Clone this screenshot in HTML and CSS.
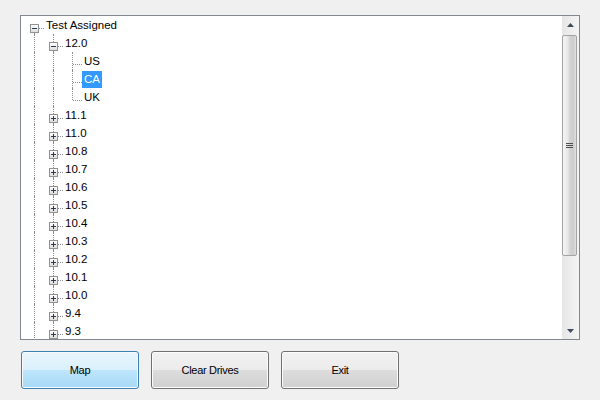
FILE: index.html
```html
<!DOCTYPE html>
<html>
<head>
<meta charset="utf-8">
<link rel="stylesheet" href="styles.css">
</head>
<body>
<div class="app">
  <div class="treebox">
    <div class="tree">
      <div class="row"><span class="cell first"><span class="box minus"></span></span><span class="label">Test Assigned</span></div>
      <div class="row"><span class="cell vline"></span><span class="cell tee"><span class="box minus"></span></span><span class="label">12.0</span></div>
      <div class="row"><span class="cell vline"></span><span class="cell vline"></span><span class="cell tee"></span><span class="label">US</span></div>
      <div class="row"><span class="cell vline"></span><span class="cell vline"></span><span class="cell tee"></span><span class="label selected">CA</span></div>
      <div class="row"><span class="cell vline"></span><span class="cell vline"></span><span class="cell last"></span><span class="label">UK</span></div>
      <div class="row"><span class="cell vline"></span><span class="cell tee"><span class="box plus"></span></span><span class="label">11.1</span></div>
      <div class="row"><span class="cell vline"></span><span class="cell tee"><span class="box plus"></span></span><span class="label">11.0</span></div>
      <div class="row"><span class="cell vline"></span><span class="cell tee"><span class="box plus"></span></span><span class="label">10.8</span></div>
      <div class="row"><span class="cell vline"></span><span class="cell tee"><span class="box plus"></span></span><span class="label">10.7</span></div>
      <div class="row"><span class="cell vline"></span><span class="cell tee"><span class="box plus"></span></span><span class="label">10.6</span></div>
      <div class="row"><span class="cell vline"></span><span class="cell tee"><span class="box plus"></span></span><span class="label">10.5</span></div>
      <div class="row"><span class="cell vline"></span><span class="cell tee"><span class="box plus"></span></span><span class="label">10.4</span></div>
      <div class="row"><span class="cell vline"></span><span class="cell tee"><span class="box plus"></span></span><span class="label">10.3</span></div>
      <div class="row"><span class="cell vline"></span><span class="cell tee"><span class="box plus"></span></span><span class="label">10.2</span></div>
      <div class="row"><span class="cell vline"></span><span class="cell tee"><span class="box plus"></span></span><span class="label">10.1</span></div>
      <div class="row"><span class="cell vline"></span><span class="cell tee"><span class="box plus"></span></span><span class="label">10.0</span></div>
      <div class="row"><span class="cell vline"></span><span class="cell tee"><span class="box plus"></span></span><span class="label">9.4</span></div>
      <div class="row"><span class="cell vline"></span><span class="cell tee"><span class="box plus"></span></span><span class="label">9.3</span></div>
    </div>
    <div class="scrollbar">
      <div class="sb-btn"><svg width="7" height="4" viewBox="0 0 7 4"><path d="M0 4 L3.5 0 L7 4 Z" fill="#3f4a5c"/></svg></div>
      <div class="sb-track">
        <div class="thumb"><span class="grip"></span></div>
      </div>
      <div class="sb-btn"><svg width="7" height="4" viewBox="0 0 7 4"><path d="M0 0 L7 0 L3.5 4 Z" fill="#3f4a5c"/></svg></div>
    </div>
  </div>
  <div class="buttons">
    <button class="btn hot">Map</button>
    <button class="btn">Clear Drives</button>
    <button class="btn">Exit</button>
  </div>
</div>
</body>
</html>
```
FILE: styles.css
```css
html, body {
  margin: 0;
  padding: 0;
  background: #f0f0f0;
  font-family: "Liberation Sans", Arial, sans-serif;
  font-size: 11px;
  color: #000;
}
.app {
  padding: 15px 0 0 20px;
}
.treebox {
  width: 560px;
  height: 325px;
  box-sizing: border-box;
  border: 1px solid #828790;
  background: #fff;
  display: flex;
}
.tree {
  flex: 1;
  overflow: hidden;
  padding-left: 4px;
}
.row {
  display: flex;
  height: 18px;
  align-items: flex-start;
}
.cell {
  position: relative;
  width: 19px;
  height: 18px;
  flex: none;
}
.cell::before,
.cell::after {
  content: "";
  position: absolute;
}
.vline::before,
.tee::before {
  left: 9px;
  top: 0;
  bottom: 0;
  border-left: 1px dotted #8c8c8c;
}
.last::before {
  left: 9px;
  top: 0;
  height: 12px;
  border-left: 1px dotted #8c8c8c;
}
.first::before {
  left: 9px;
  top: 12px;
  bottom: 0;
  border-left: 1px dotted #8c8c8c;
}
.tee::after,
.last::after,
.first::after {
  left: 10px;
  right: 0;
  top: 12px;
  border-top: 1px dotted #8c8c8c;
}
.box {
  position: absolute;
  left: 5px;
  top: 8px;
  width: 9px;
  height: 9px;
  box-sizing: border-box;
  border: 1px solid #929292;
  background: linear-gradient(#ffffff, #dedede);
  z-index: 1;
}
.box::before {
  content: "";
  position: absolute;
  left: 1px;
  top: 3px;
  width: 5px;
  height: 1px;
  background: #2b3a56;
}
.plus::after {
  content: "";
  position: absolute;
  left: 3px;
  top: 1px;
  width: 1px;
  height: 5px;
  background: #2b3a56;
}
.label {
  font-size: 11.5px;
  line-height: 17px;
  margin-top: 1px;
  padding: 0 2px;
  white-space: nowrap;
}
.label.selected {
  background: #3399ff;
  color: #fff;
}
.scrollbar {
  width: 17px;
  flex: none;
  display: flex;
  flex-direction: column;
  background: linear-gradient(to right, #e6e6e6, #f4f4f4);
}
.sb-btn {
  height: 17px;
  flex: none;
  display: flex;
  align-items: center;
  justify-content: center;
}
.sb-track {
  flex: 1;
  padding-top: 2px;
}
.thumb {
  margin: 0 2px 0 0;
  height: 221px;
  box-sizing: border-box;
  border: 1px solid #a3a3a3;
  border-radius: 2px;
  background: linear-gradient(to right, #f6f6f6 0%, #e8e8e8 35%, #d2d2d2 55%, #cdcdcd 80%, #e0e0e0 100%);
  display: flex;
  align-items: center;
  justify-content: center;
}
.grip {
  width: 7px;
  height: 5px;
  background: repeating-linear-gradient(#4e4e4e 0 1px, transparent 1px 2px);
}
.buttons {
  display: flex;
  gap: 12px;
  margin-top: 11px;
  padding-left: 1px;
}
.btn {
  width: 118px;
  height: 38px;
  box-sizing: border-box;
  border: 1px solid #707070;
  border-radius: 3px;
  font-family: "Liberation Sans", Arial, sans-serif;
  font-size: 11px;
  letter-spacing: -0.3px;
  color: #000;
  padding: 0;
  background: linear-gradient(#f2f2f2 0%, #ebebeb 50%, #dddddd 50%, #cfcfcf 100%);
  box-shadow: inset 0 0 0 1px #fcfcfc;
}
.btn.hot {
  border-color: #3c7fb1;
  background: linear-gradient(#eaf6fd 0%, #d9f0fc 50%, #bee6fd 50%, #a7d9f5 100%);
  box-shadow: inset 0 0 0 1px #f5fbfe;
}
```
